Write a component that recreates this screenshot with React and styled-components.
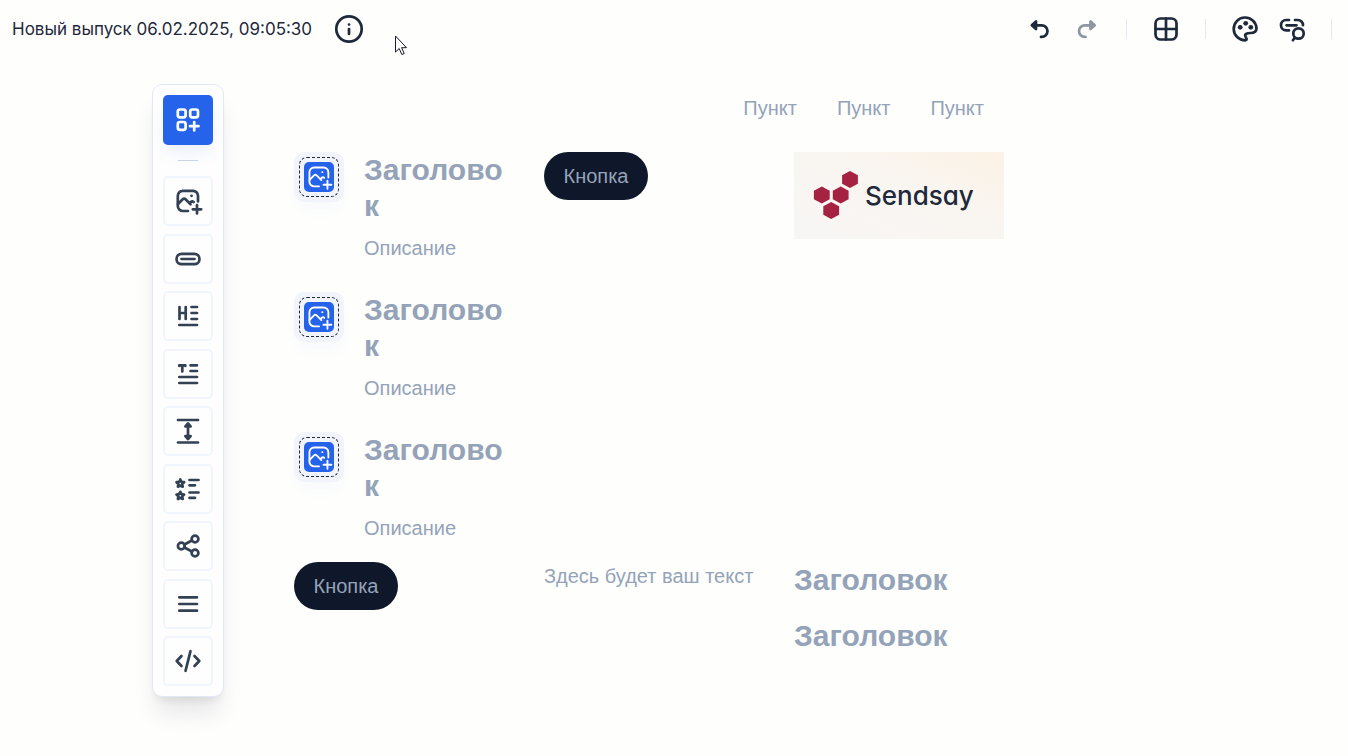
import React from 'react'
import styled, { createGlobalStyle } from 'styled-components'

const tools = [
  {
    label: 'Изображение',
    icon: (
      <>
        <path d="M26 16.5V10.800a5 5 0 0 0-5-5H10.800a5 5 0 0 0-5 5V21a5 5 0 0 0 5 5H16" />
        <path d="M6 19l4.700-4.700a2 2 0 0 1 2.800 0l5 5M17.500 18.300l1.300-1.300a2 2 0 0 1 2.800 0" />
        <path d="M19.500 10.800h.1" />
        <path d="M25 20v8.500M20.800 24.300h8.400" />
      </>
    ),
  },
  {
    label: 'Кнопка',
    icon: (
      <>
        <rect x="4.500" y="10.800" width="23" height="10.400" rx="5.200" />
        <path d="M9.500 16h13" />
      </>
    ),
  },
  {
    label: 'Заголовок',
    icon: (
      <path d="M7.500 7v12M13.700 7v12M7.500 13h6.200M19.500 7H25M19.500 13H25M19.500 19H25M7.300 25H25" />
    ),
  },
  {
    label: 'Текст',
    icon: (
      <path d="M7.300 8V7.300h6V8M10.300 7.300v6.200M18.500 7.300H25M18.500 13H25M7.300 19H25M7.300 25H25" />
    ),
  },
  {
    label: 'Отступ',
    icon: (
      <>
        <path d="M6 5h20M6 27.500h20M16 10v12" />
        <path d="M16 8.500l2.600 3h-5.200zM16 24l2.600-3h-5.200z" fill="currentColor" />
      </>
    ),
  },
  {
    label: 'Список',
    icon: (
      <>
        <path d="M8.300 6.500l1.200 2.300 2.600.4-1.900 1.900.5 2.600-2.400-1.200-2.400 1.200.5-2.600-1.900-1.900 2.600-.4z" />
        <path d="M8.300 18.800l1.200 2.300 2.600.4-1.900 1.900.5 2.600-2.400-1.200-2.400 1.200.5-2.600-1.900-1.900 2.600-.4z" />
        <path d="M17.500 7h9M17.500 12.300h5.500M17.500 19.500h9M17.500 24.800h5.500" />
      </>
    ),
  },
  {
    label: 'Соцсети',
    icon: (
      <>
        <circle cx="23" cy="9" r="3.400" />
        <circle cx="9.300" cy="16" r="3.400" />
        <circle cx="23" cy="23" r="3.400" />
        <path d="M12.400 14.500l7.500-4M12.400 17.500l7.500 4" />
      </>
    ),
  },
  {
    label: 'Меню',
    icon: <path d="M7.300 9.300H25M7.300 16H25M7.300 22.700H25" />,
  },
  {
    label: 'HTML-код',
    icon: <path d="M9.500 11L4.700 16l4.800 5M22.500 11l4.800 5-4.800 5M18.500 6.200l-5 19.600" />,
  },
]

const features = [1, 2, 3]
const menuItems = [1, 2, 3]

const Icon = ({ size = 32, children }) => (
  <Svg width={size} height={size} viewBox="0 0 32 32" aria-hidden="true">
    {children}
  </Svg>
)

const Logo = () => (
  <LogoSvg viewBox="0 0 210 87" role="img" aria-label="Sendsay">
    <defs>
      <linearGradient id="logoBg" x1="0" y1="1" x2="1" y2="0">
        <stop offset="0" stopColor="#f8f6f5" />
        <stop offset="0.6" stopColor="#f9f5f0" />
        <stop offset="1" stopColor="#fcf2e5" />
      </linearGradient>
      <path id="hex" d="M0-8.600l7.900 4.300v8.600L0 8.600l-7.900-4.300v-8.600z" />
    </defs>
    <rect width="210" height="87" fill="url(#logoBg)" />
    <g fill="#a52242">
      <use href="#hex" x="56" y="27.500" />
      <use href="#hex" x="27.800" y="43" />
      <use href="#hex" x="46.700" y="43" />
      <use href="#hex" x="37.200" y="58.500" />
    </g>
    <LogoText x="71" y="53">
      Sendsay
    </LogoText>
  </LogoSvg>
)

const App = () => {
  return (
    <>
      <GlobalStyle />
      <Header>
        <IssueName>Новый выпуск 06.02.2025, 09:05:30</IssueName>
        <HeaderButton aria-label="Информация">
          <Icon>
            <circle cx="16" cy="16" r="12.700" />
            <path d="M16 16v5M16 11.500h.1" />
          </Icon>
        </HeaderButton>
        <Actions>
          <HeaderButton aria-label="Отменить">
            <Icon>
              <path d="M12 12.300h6.700a5.800 5.800 0 0 1 0 11.600H18" />
              <path d="M8.800 12.300l4.200-3.800v7.600z" fill="currentColor" />
            </Icon>
          </HeaderButton>
          <HeaderButton aria-label="Повторить" disabled>
            <Icon>
              <path d="M20 12.300h-6.200a5.800 5.800 0 0 0 0 11.600H14.500" />
              <path d="M23.700 12.300l-4.200-3.800v7.600z" fill="currentColor" />
            </Icon>
          </HeaderButton>
          <Separator />
          <HeaderButton aria-label="Сетка">
            <Icon>
              <rect x="5.500" y="5.500" width="21" height="21" rx="5" />
              <path d="M16 5.500v21M5.500 16h21" />
            </Icon>
          </HeaderButton>
          <Separator />
          <HeaderButton aria-label="Оформление">
            <Icon>
              <path d="M16.200 27.300A11.400 11.400 0 1 1 27.500 15.300C27.500 19 24.500 20 21.500 20c-4 0-6 1.200-5 3.500.8 1.600 2.200 3.600-.3 3.800z" />
              <g fill="currentColor" stroke="none">
                <circle cx="16.700" cy="10.300" r="2.400" />
                <circle cx="11.200" cy="14.300" r="2.400" />
                <circle cx="21.800" cy="14.300" r="2.400" />
              </g>
            </Icon>
          </HeaderButton>
          <HeaderButton aria-label="Проверить ссылки">
            <Icon>
              <path d="M12 7H9.200a5.200 5.200 0 0 0 0 10.400H12M9.500 12.300h10M18 7h2.800a5.200 5.200 0 0 1 5.200 5.200" />
              <circle cx="21.500" cy="20.500" r="5.200" />
              <path d="M17.800 24.800L15.900 27.300" />
            </Icon>
          </HeaderButton>
          <Separator />
        </Actions>
      </Header>
      <Pointer viewBox="0 0 14 21" aria-hidden="true">
        <path d="M1.500 1v16l3.700-3.500 2.600 6 2.400-1-2.600-5.800h4.900z" />
      </Pointer>
      <Main>
        <Toolbar aria-label="Блоки">
          <BlocksButton aria-label="Добавить блок">
            <Icon>
              <rect x="5.800" y="5.500" width="7.800" height="7.800" rx="2" />
              <rect x="18.200" y="5.500" width="7.800" height="7.800" rx="2" />
              <rect x="5.800" y="18" width="7.800" height="7.800" rx="2" />
              <path d="M22.200 18v8.500M18 22.200h8.500" />
            </Icon>
          </BlocksButton>
          <Divider />
          <ToolList>
            {tools.map((tool) => (
              <ToolButton key={tool.label} aria-label={tool.label}>
                <Icon>{tool.icon}</Icon>
              </ToolButton>
            ))}
          </ToolList>
        </Toolbar>
        <Canvas>
          <Menu>
            {menuItems.map((item) => (
              <MenuLink key={item} href="#">
                Пункт
              </MenuLink>
            ))}
          </Menu>
          <Row>
            <Features>
              {features.map((item) => (
                <Feature key={item}>
                  <Placeholder>
                    <Dashed>
                      <BlueBox>
                        <Icon size={30}>{tools[0].icon}</Icon>
                      </BlueBox>
                    </Dashed>
                  </Placeholder>
                  <div>
                    <Title>Заголовок</Title>
                    <Description>Описание</Description>
                  </div>
                </Feature>
              ))}
            </Features>
            <div>
              <PillButton>Кнопка</PillButton>
            </div>
            <Logo />
          </Row>
          <Row>
            <div>
              <PillButton>Кнопка</PillButton>
            </div>
            <Text>Здесь будет ваш текст</Text>
            <Headings>
              <Title>Заголовок</Title>
              <Title>Заголовок</Title>
            </Headings>
          </Row>
        </Canvas>
      </Main>
    </>
  )
}
export default App

const GlobalStyle = createGlobalStyle`
  * {
    box-sizing: border-box;
  }

  body {
    margin: 0;
    background-color: #fefefd;
    font-family: 'Liberation Sans', Arial, sans-serif;
    font-size: 20px;
    color: #94a3b8;
  }

  h2, p {
    margin: 0;
  }

  button {
    padding: 0;
    border: none;
    background: none;
    font: inherit;
    cursor: pointer;
  }
`
const Svg = styled.svg`
  display: block;
  fill: none;
  stroke: currentColor;
  stroke-width: 2.7;
  stroke-linecap: round;
  stroke-linejoin: round;
`
const Header = styled.header`
  display: flex;
  align-items: center;
  height: 58px;
  padding: 0 16px 0 12px;
`
const IssueName = styled.span`
  margin-right: 21px;
  font-family: Inter, sans-serif;
  font-size: 17px;
  color: #1e293b;
`
const HeaderButton = styled.button`
  color: #1e293b;

  &:disabled {
    color: #8e96a3;
    cursor: default;
  }
`
const Actions = styled.div`
  display: flex;
  align-items: center;
  gap: 16px;
  margin-left: auto;
`
const Separator = styled.span`
  width: 1px;
  height: 20px;
  margin: 0 7px;
  background-color: #e2e8f0;

  &:last-child {
    margin: 0 0 0 6px;
  }
`
const Pointer = styled.svg`
  position: absolute;
  top: 35px;
  left: 394px;
  width: 14px;
  height: 21px;
  fill: #fff;
  stroke: #1b1b2b;
`
const Main = styled.main`
  display: grid;
  grid-template-columns: 72px minmax(0, 710px);
  align-items: start;
  column-gap: 70px;
  padding: 26px 20px 40px 152px;
`
const Toolbar = styled.nav`
  display: flex;
  flex-direction: column;
  align-items: center;
  padding: 10px 0;
  border: 1px solid #e2e8f4;
  border-radius: 10px;
  background-color: #fefefe;
  box-shadow: 0 20px 25px -5px rgba(15, 23, 42, 0.1),
    0 8px 10px -6px rgba(15, 23, 42, 0.1);
`
const BlocksButton = styled.button`
  && {
    display: grid;
    place-items: center;
    width: 50px;
    height: 50px;
    border-radius: 5px;
    background-color: #2563eb;
    color: #fff;
    box-shadow: 0 10px 15px -3px rgba(37, 99, 235, 0.1);
  }
`
const Divider = styled.span`
  width: 20px;
  height: 1px;
  margin: 15px 0;
  background-color: #cbd5e1;
`
const ToolList = styled.div`
  display: flex;
  flex-direction: column;
  justify-content: space-between;
  min-height: 510px;
`
const ToolButton = styled.button`
  && {
    display: grid;
    place-items: center;
    width: 50px;
    height: 50px;
    border: 2px solid #f1f5fd;
    border-radius: 5px;
    color: #334155;
  }
`
const Canvas = styled.section`
  display: flex;
  flex-direction: column;
  gap: 20px;
`
const Menu = styled.nav`
  display: flex;
  justify-content: flex-end;
  gap: 40px;
  padding: 12px 20px 11px;
`
const MenuLink = styled.a`
  line-height: 25px;
  color: inherit;
  text-decoration: none;
`
const Row = styled.div`
  display: grid;
  grid-template-columns: repeat(3, minmax(0, 1fr));
  align-items: start;
  gap: 40px;
`
const Features = styled.div`
  display: flex;
  flex-direction: column;
  gap: 30px;
`
const Feature = styled.article`
  display: grid;
  grid-template-columns: 50px minmax(0, 1fr);
  align-items: start;
  gap: 20px;
  min-height: 110px;
`
const Placeholder = styled.div`
  padding: 5px;
  border-radius: 10px;
  background-color: #f1f5fb;
  box-shadow: 0 10px 15px -3px rgba(37, 99, 235, 0.03);
`
const Dashed = styled.div`
  padding: 4px;
  border: 1px dashed #1e293b;
  border-radius: 8px;
`
const BlueBox = styled.div`
  border-radius: 5px;
  background-color: #2563eb;
  color: #fff;

  ${Svg} {
    stroke-width: 2;
  }
`
const Title = styled.h2`
  font-size: 30px;
  font-weight: 700;
  line-height: 36px;
  overflow-wrap: anywhere;
`
const Description = styled.p`
  margin-top: 11px;
  line-height: 26px;
`
const PillButton = styled.button`
  && {
    min-width: 104px;
    height: 48px;
    padding: 0 19px;
    border-radius: 24px;
    background-color: #0f172a;
    color: #94a3b8;
  }
`
const Text = styled.p`
  line-height: 28px;
  white-space: nowrap;
`
const Headings = styled.div`
  display: flex;
  flex-direction: column;
  gap: 20px;
`
const LogoSvg = styled.svg`
  display: block;
  width: 100%;
`
const LogoText = styled.text`
  font-family: Inter, sans-serif;
  font-size: 26px;
  font-weight: 500;
  font-feature-settings: 'cv11';
  fill: #1e293b;
`
